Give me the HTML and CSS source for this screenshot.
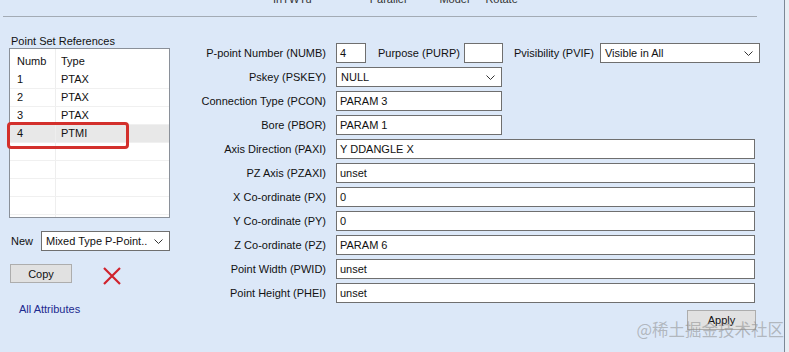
FILE: index.html
```html
<!DOCTYPE html>
<html lang="en">
<head>
    <meta charset="UTF-8">
    <title>Point Set</title>
    <link rel="stylesheet" href="styles.css">
</head>
<body>

<div class="window">

    <div class="tabs">
        <span class="tab t1">InTWTu</span>
        <span class="tab t2">Parallel</span>
        <span class="tab t3">Model</span>
        <span class="tab t4">Rotate</span>
    </div>

    <div class="main">

        <div class="left">
            <div class="caption">Point Set References</div>
            <div class="listwrap">
                <div class="listbox">
                    <div class="lrow head"><span class="c1">Numb</span><span class="c2">Type</span></div>
                    <div class="lrow"><span class="c1">1</span><span class="c2">PTAX</span></div>
                    <div class="lrow"><span class="c1">2</span><span class="c2">PTAX</span></div>
                    <div class="lrow"><span class="c1">3</span><span class="c2">PTAX</span></div>
                    <div class="lrow sel"><span class="c1">4</span><span class="c2">PTMI</span></div>
                    <div class="lrow"><span class="c1"></span><span class="c2"></span></div>
                    <div class="lrow"><span class="c1"></span><span class="c2"></span></div>
                    <div class="lrow"><span class="c1"></span><span class="c2"></span></div>
                    <div class="lrow"><span class="c1"></span><span class="c2"></span></div>
                    <div class="lrow"><span class="c1"></span><span class="c2"></span></div>
                </div>
                <div class="mark"></div>
            </div>

            <div class="newrow">
                <span class="newlbl">New</span>
                <div class="combo wnew"><span>Mixed Type P-Point..</span>
                    <svg class="chev" width="9" height="5" viewBox="0 0 9 5"><polyline points="0.5,0.5 4.5,4.5 8.5,0.5" fill="none" stroke="#333" stroke-width="1"/></svg>
                </div>
            </div>

            <div class="copyrow">
                <button class="btn copy">Copy</button>
                <svg class="redx" width="18" height="18" viewBox="0 0 18 18">
                    <path d="M1 1 L17 17 M17 1 L1 17" stroke="#d0222c" stroke-width="2.2" fill="none"/>
                </svg>
            </div>

            <div class="link">All Attributes</div>
        </div>

        <div class="form">
            <div class="frow">
                <label>P-point Number (NUMB)</label>
                <div class="fields">
                    <div class="box wnum">4</div>
                    <label class="inl">Purpose (PURP)</label>
                    <div class="box wpurp"></div>
                    <label class="inl vis">Pvisibility (PVIF)</label>
                    <div class="combo wvis"><span>Visible in All</span>
                        <svg class="chev" width="9" height="5" viewBox="0 0 9 5"><polyline points="0.5,0.5 4.5,4.5 8.5,0.5" fill="none" stroke="#333" stroke-width="1"/></svg>
                    </div>
                </div>
            </div>
            <div class="frow">
                <label>Pskey (PSKEY)</label>
                <div class="combo wmid"><span>NULL</span>
                    <svg class="chev" width="9" height="5" viewBox="0 0 9 5"><polyline points="0.5,0.5 4.5,4.5 8.5,0.5" fill="none" stroke="#333" stroke-width="1"/></svg>
                </div>
            </div>
            <div class="frow">
                <label>Connection Type (PCON)</label>
                <div class="box wmid">PARAM 3</div>
            </div>
            <div class="frow">
                <label>Bore (PBOR)</label>
                <div class="box wmid">PARAM 1</div>
            </div>
            <div class="frow">
                <label>Axis Direction (PAXI)</label>
                <div class="box wfull">Y DDANGLE X</div>
            </div>
            <div class="frow">
                <label>PZ Axis (PZAXI)</label>
                <div class="box wfull">unset</div>
            </div>
            <div class="frow">
                <label>X Co-ordinate (PX)</label>
                <div class="box wfull">0</div>
            </div>
            <div class="frow">
                <label>Y Co-ordinate (PY)</label>
                <div class="box wfull">0</div>
            </div>
            <div class="frow">
                <label>Z Co-ordinate (PZ)</label>
                <div class="box wfull">PARAM 6</div>
            </div>
            <div class="frow">
                <label>Point Width (PWID)</label>
                <div class="box wfull">unset</div>
            </div>
            <div class="frow">
                <label>Point Height (PHEI)</label>
                <div class="box wfull">unset</div>
            </div>
            <div class="applyrow">
                <button class="btn apply">Apply</button>
            </div>
        </div>

    </div>

    <div class="watermark">@稀土掘金技术社区</div>
</div>

</body>
</html>
```

FILE: styles.css
```css
body {
    margin: 0;
    background: #e9eef4;
    font-family: "Liberation Sans", Arial, sans-serif;
    font-size: 11px;
    color: #111;
}

.window {
    position: relative;
    width: 784px;
    height: 352px;
    background: #dce8f8;
    border-right: 1px solid #7c8896;
    overflow: hidden;
}

/* cut off tab strip at the top */
.tabs {
    display: flex;
    height: 16px;
    margin: 0 27px 0 3px;
    border-bottom: 1px solid #a3abb5;
    overflow: hidden;
}

.tab {
    margin-top: -8px;
    line-height: 14px;
    color: #333;
}

.t1 { margin-left: 270px; }
.t2 { margin-left: 58px; }
.t3 { margin-left: 33px; }
.t4 { margin-left: 16px; }

.main {
    display: flex;
}

.left {
    width: 161px;
    margin-left: 9px;
    padding-top: 17px;
}

.caption {
    height: 14px;
    line-height: 14px;
    padding-left: 2px;
}

.listwrap {
    position: relative;
}

.listbox {
    height: 168px;
    background: #fff;
    border: 1px solid #8a9099;
    overflow: hidden;
}

.lrow {
    display: flex;
    height: 17px;
    line-height: 16px;
    border-bottom: 1px solid #f0f0f0;
}

.lrow.head {
    height: 22px;
    line-height: 24px;
    border-bottom: none;
}

.lrow.sel {
    background: #e8e8e8;
}

.c1 {
    width: 38px;
    padding-left: 7px;
    border-right: 1px solid #eeeeee;
}

.c2 {
    padding-left: 5px;
}

.mark {
    position: absolute;
    left: -2px;
    top: 74px;
    width: 116px;
    height: 21px;
    border: 3px solid #d3302c;
    border-radius: 4px;
}

.newrow {
    display: flex;
    align-items: center;
    margin-top: 13px;
}

.newlbl {
    width: 30px;
    padding-left: 2px;
}

.combo {
    display: flex;
    align-items: center;
    justify-content: space-between;
    box-sizing: border-box;
    height: 20px;
    padding: 0 6px 0 4px;
    background: #fff;
    border: 1px solid #6f6f6f;
}

.wnew { width: 129px; }

.chev {
    display: block;
}

.copyrow {
    display: flex;
    align-items: flex-start;
    margin-top: 13px;
}

.btn {
    box-sizing: border-box;
    height: 19px;
    padding: 0;
    font-family: "Liberation Sans", Arial, sans-serif;
    font-size: 11px;
    color: #111;
    background: #e1e1e1;
    border: 1px solid #adadad;
}

.copy {
    width: 62px;
    margin-left: 1px;
}

.redx {
    margin: 3px 0 0 31px;
}

.link {
    margin: 17px 0 0 10px;
    color: #1c2a8f;
    line-height: 14px;
}

.form {
    padding-top: 26px;
    margin-left: 20px;
}

.frow {
    display: flex;
    align-items: center;
    height: 20px;
    margin-bottom: 4px;
}

.frow > label {
    width: 136px;
    margin-right: 10px;
    text-align: right;
}

.fields {
    display: flex;
    align-items: center;
}

.box {
    box-sizing: border-box;
    height: 20px;
    line-height: 18px;
    padding-left: 3px;
    background: #fff;
    border: 1px solid #6f6f6f;
}

.wnum { width: 30px; }
.wpurp { width: 39px; }
.wmid { width: 166px; }
.wfull { width: 419px; }
.wvis { width: 160px; }

.inl {
    margin: 0 4px 0 12px;
}

.inl.vis {
    margin: 0 6px 0 11px;
}

.applyrow {
    display: flex;
    justify-content: flex-end;
    margin-top: 7px;
    width: 566px;
}

.apply {
    width: 69px;
    height: 20px;
}

.watermark {
    position: absolute;
    right: 0;
    bottom: 11px;
    font-family: "Noto Sans CJK SC", sans-serif;
    font-size: 16.5px;
    color: rgba(140, 140, 140, 0.55);
}
```
